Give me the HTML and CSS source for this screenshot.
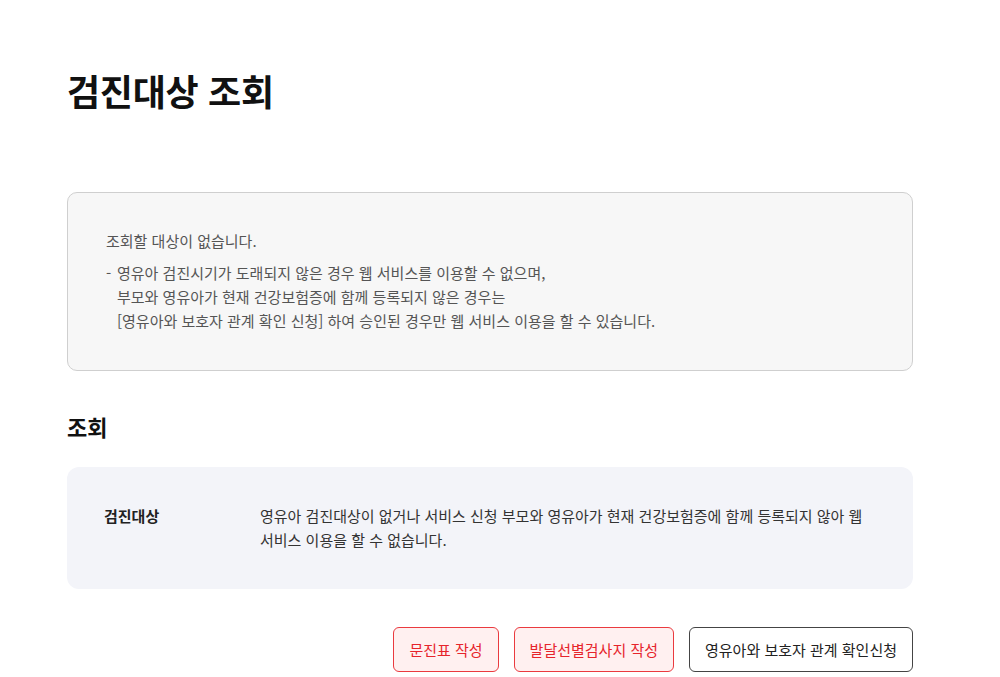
FILE: index.html
```html
<!DOCTYPE html>
<html lang="ko">
<head>
<meta charset="utf-8">
<title>검진대상 조회</title>
<link rel="stylesheet" href="styles.css">
</head>
<body>
<main class="page">
  <h1 class="title">검진대상 조회</h1>
  <section class="notice">
    <p class="notice-main">조회할 대상이 없습니다.</p>
    <p class="notice-desc"><span class="dash">-</span><span class="desc-text">영유아 검진시기가 도래되지 않은 경우 웹 서비스를 이용할 수 없으며,<br>부모와 영유아가 현재 건강보험증에 함께 등록되지 않은 경우는<br>[영유아와 보호자 관계 확인 신청] 하여 승인된 경우만 웹 서비스 이용을 할 수 있습니다.</span></p>
  </section>
  <h2 class="subtitle">조회</h2>
  <section class="result">
    <div class="result-label">검진대상</div>
    <div class="result-value">영유아 검진대상이 없거나 서비스 신청 부모와 영유아가 현재 건강보험증에 함께 등록되지 않아 웹 서비스 이용을 할 수 없습니다.</div>
  </section>
  <div class="actions">
    <button class="btn btn-red" type="button">문진표 작성</button>
    <button class="btn btn-red" type="button">발달선별검사지 작성</button>
    <button class="btn btn-line" type="button">영유아와 보호자 관계 확인신청</button>
  </div>
</main>
</body>
</html>
```
FILE: styles.css
```css
html, body {
  margin: 0;
  padding: 0;
  background: #fff;
}
body {
  font-family: "Noto Sans CJK KR", "Noto Sans", sans-serif;
  color: #222;
}
.page {
  width: 846px;
  padding: 66px 0 0 67px;
}
.title {
  margin: 0;
  font-size: 36px;
  line-height: 48px;
  font-weight: 700;
  color: #111;
  letter-spacing: -0.3px;
}
.notice {
  margin-top: 78px;
  border: 1px solid #cfcfcf;
  border-radius: 10px;
  background: #f7f7f7;
  padding: 36px 38px 37px;
  font-size: 15px;
  line-height: 24px;
  color: #555;
}
.notice p {
  margin: 0;
}
.notice-main {
  margin-bottom: 8px !important;
}
.notice-desc {
  display: flex;
}
.dash {
  width: 11px;
  flex: none;
}
.subtitle {
  margin: 40px 0 0;
  font-size: 22px;
  line-height: 30px;
  font-weight: 700;
  color: #111;
}
.result {
  margin-top: 26px;
  background: #f3f4f9;
  border-radius: 12px;
  padding: 37px 38px 37px 37px;
  display: flex;
  font-size: 15px;
  line-height: 24px;
}
.result-label {
  width: 156px;
  flex: none;
  font-weight: 700;
  color: #222;
}
.result-value {
  color: #333;
}
.actions {
  margin-top: 38px;
  display: flex;
  justify-content: flex-end;
  gap: 15px;
}
.btn {
  height: 45px;
  padding: 0 15px;
  border-radius: 6px;
  font-family: inherit;
  font-size: 15px;
  background: #fff;
  cursor: pointer;
}
.btn-red {
  border: 1px solid #ea3a3f;
  background: #fff0f0;
  color: #e6242b;
}
.btn-line {
  border: 1px solid #444;
  color: #222;
}
```
